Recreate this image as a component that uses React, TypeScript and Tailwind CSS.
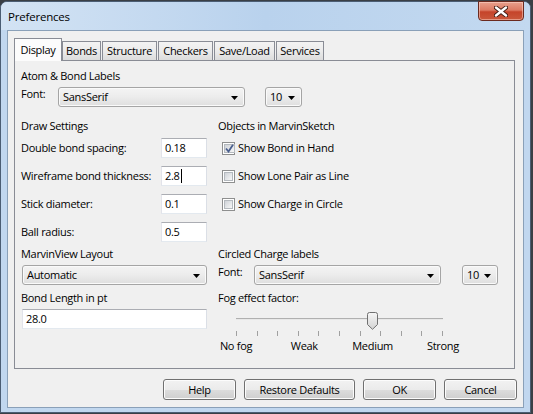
import React from "react";

function Arrow() {
  return (
    <svg width="7" height="4" viewBox="0 0 7 4" className="mt-[2px]">
      <path d="M0 0H7L3.5 4Z" fill="#000" />
    </svg>
  );
}

function Combo({ text, className }: { text: string; className: string }) {
  return (
    <div
      className={`h-[20px] ${className} flex items-center justify-between rounded-[3px] border border-[#a5a5a5] bg-gradient-to-b from-[#f4f4f4] via-[#ececec] to-[#dedede] pl-[4px] pr-[6px] shadow-[inset_0_0_0_1px_#fafafa]`}
    >
      <span className="leading-[14px]">{text}</span>
      <Arrow />
    </div>
  );
}

function Field({ text, className, caret }: { text: string; className: string; caret?: boolean }) {
  return (
    <div
      className={`h-[20px] ${className} flex items-center border border-[#abadb3] border-l-[#e2e3ea] border-r-[#dbdfe6] border-b-[#e3e9ef] bg-white pl-[3px]`}
    >
      <span className="leading-[14px]">{text}</span>
      {caret && <span className="ml-[1px] inline-block h-[14px] w-[1px] bg-black" />}
    </div>
  );
}

function Check({ checked }: { checked?: boolean }) {
  return (
    <div className="flex h-[13px] w-[13px] border border-[#8e8f8f] bg-white p-[1px]">
      <div className="flex flex-1 items-center justify-center border border-[#b4b9be] bg-gradient-to-br from-[#cfd3d8] to-[#f7f7f7]">
        {checked && (
          <svg width="9" height="9" viewBox="0 0 9 9">
            <path d="M1 4.5L3.5 7.5L8 0.8" fill="none" stroke="#4a5f8e" strokeWidth="1.8" />
          </svg>
        )}
      </div>
    </div>
  );
}

function Button({ text, className }: { text: string; className: string }) {
  return (
    <div
      className={`h-[21px] ${className} flex items-center justify-center rounded-[3px] border border-[#707070] bg-[linear-gradient(#f2f2f2_0%,#ebebeb_50%,#dddddd_51%,#cfcfcf_100%)] shadow-[inset_0_0_0_1px_#fcfcfc]`}
    >
      <span className="leading-[14px]">{text}</span>
    </div>
  );
}

function Tab({ text, className, selected }: { text: string; className: string; selected?: boolean }) {
  if (selected) {
    return (
      <div
        className={`relative z-10 mb-[-1px] h-[23px] ${className} flex justify-center border border-b-0 border-[#898c95] bg-[#fcfcfc] pt-[4px]`}
      >
        <span className="leading-[14px]">{text}</span>
      </div>
    );
  }
  return (
    <div
      className={`h-[19px] ${className} flex justify-center border border-b-0 border-[#898c95] bg-gradient-to-b from-[#f3f3f3] via-[#ebebeb] to-[#dcdcdc] pt-[2px]`}
    >
      <span className="leading-[14px]">{text}</span>
    </div>
  );
}

function CloseIcon() {
  return (
    <svg width="14" height="11" viewBox="0 0 14 11">
      <path d="M2 1.5L12 9.5M12 1.5L2 9.5" stroke="#3d1a12" strokeWidth="4.2" strokeLinecap="round" />
      <path d="M2 1.5L12 9.5M12 1.5L2 9.5" stroke="#ffffff" strokeWidth="2.4" strokeLinecap="round" />
    </svg>
  );
}

function Thumb() {
  return (
    <svg width="11" height="18" viewBox="0 0 11 18">
      <defs>
        <linearGradient id="tg" x1="0" y1="0" x2="0" y2="1">
          <stop offset="0" stopColor="#f6f6f6" />
          <stop offset="1" stopColor="#d3d3d3" />
        </linearGradient>
      </defs>
      <path
        d="M0.5 2.5Q0.5 0.5 2.5 0.5H8.5Q10.5 0.5 10.5 2.5V12.5L5.5 17.3L0.5 12.5Z"
        fill="url(#tg)"
        stroke="#707070"
      />
    </svg>
  );
}

export default function App() {
  const ticks = Array.from({ length: 11 }, (_, i) => i);
  return (
    <div className="h-[414px] w-[533px] overflow-hidden bg-[#3a3f45] pt-[1px] font-['Open_Sans','Noto_Sans',sans-serif] text-[11px] tracking-[-0.3px] text-black">
      <div className="flex h-[412px] w-[531px] flex-col rounded-t-[7px] border border-[#4b5d73] bg-[#c1d7ef]">
        {/* Title bar */}
        <div className="flex h-[28px] items-start rounded-t-[6px] bg-gradient-to-r from-[#d3e3f4] via-[#b9d2ed] to-[#c3d9f0]">
          <div className="pl-[7px] pt-[7px] text-[11.5px] leading-[15px] tracking-[-0.2px] text-black">Preferences</div>
          <div className="ml-auto mr-[6px] mt-[-1px] flex h-[20px] w-[46px] items-center justify-center rounded-b-[4px] border border-[#6b2a1f] bg-[linear-gradient(#e8a08d_0%,#dc7a63_45%,#c5442a_55%,#c9583c_100%)] shadow-[inset_0_0_0_1px_rgba(255,220,210,0.5)]">
            <CloseIcon />
          </div>
        </div>
        {/* Client area */}
        <div className="mx-[6px] flex h-[378px] flex-col border border-[#8aa0b8] bg-[#f0f0f0]">
          {/* Tabs */}
          <div className="mt-[7px] flex h-[22px] items-end pl-[6px]">
            <Tab text="Display" className="w-[48px]" selected />
            <Tab text="Bonds" className="w-[39px]" />
            <Tab text="Structure" className="ml-[1px] w-[55px]" />
            <Tab text="Checkers" className="ml-[1px] w-[55px]" />
            <Tab text="Save/Load" className="ml-[1px] w-[61px]" />
            <Tab text="Services" className="ml-[1px] w-[48px]" />
          </div>
          {/* Panel */}
          <div className="ml-[6px] flex h-[309px] w-[501px] flex-col border border-[#898c95] bg-[#f0f0f0] pl-[6px]">
            <div className="mt-[7px] h-[15px] leading-[15px]">Atom &amp; Bond Labels</div>
            <div className="mt-[4px] flex h-[20px] items-start">
              <div className="w-[37px] leading-[14px]">Font:</div>
              <Combo text="SansSerif" className="w-[187px]" />
              <Combo text="10" className="ml-[20px] w-[37px]" />
            </div>

            <div className="grid grid-cols-[186px_1fr] gap-x-[11px]">
              <div className="mt-[11px] h-[15px] leading-[15px]">Draw Settings</div>
              <div className="mt-[11px] h-[15px] leading-[15px]">Objects in MarvinSketch</div>

              <div className="mt-[5px] flex h-[20px] items-center justify-between">
                <span>Double bond spacing:</span>
                <Field text="0.18" className="w-[46px]" />
              </div>
              <div className="mt-[5px] flex h-[20px] items-center pl-[4px]">
                <Check checked />
                <span className="ml-[3px]">Show Bond in Hand</span>
              </div>

              <div className="mt-[8px] flex h-[20px] items-center justify-between">
                <span>Wireframe bond thickness:</span>
                <Field text="2.8" className="w-[46px]" caret />
              </div>
              <div className="mt-[8px] flex h-[20px] items-center pl-[4px]">
                <Check />
                <span className="ml-[3px]">Show Lone Pair as Line</span>
              </div>

              <div className="mt-[8px] flex h-[20px] items-center justify-between">
                <span>Stick diameter:</span>
                <Field text="0.1" className="w-[46px]" />
              </div>
              <div className="mt-[8px] flex h-[20px] items-center pl-[4px]">
                <Check />
                <span className="ml-[3px]">Show Charge in Circle</span>
              </div>

              <div className="mt-[8px] flex h-[20px] items-center justify-between">
                <span>Ball radius:</span>
                <Field text="0.5" className="w-[46px]" />
              </div>
              <div className="mt-[8px] h-[20px]" />

              <div className="mt-[4px] h-[15px] leading-[15px]">MarvinView Layout</div>
              <div className="mt-[4px] h-[15px] leading-[15px]">Circled Charge labels</div>

              <div className="mt-[4px] flex h-[20px] pl-[1px]">
                <Combo text="Automatic" className="w-[185px]" />
              </div>
              <div className="mt-[4px] flex h-[20px] items-start">
                <div className="w-[36px] leading-[14px]">Font:</div>
                <Combo text="SansSerif" className="w-[187px]" />
                <Combo text="10" className="ml-[21px] w-[36px]" />
              </div>

              <div className="mt-[5px] h-[15px] leading-[15px]">Bond Length in pt</div>
              <div className="mt-[5px] h-[15px] leading-[15px]">Fog effect factor:</div>

              <div className="mt-[4px] flex pl-[1px]">
                <Field text="28.0" className="w-[185px]" />
              </div>
              <div className="ml-[18px] mt-[7px] flex w-[207px] flex-col">
                <div className="relative h-[18px]">
                  <div className="absolute left-0 right-0 top-[6px] h-[2px] border-t border-[#b0b0b0] bg-[#e8e8e8]" />
                  <div className="absolute left-[131px] top-0">
                    <Thumb />
                  </div>
                </div>
                <div className="mt-[1px] flex h-[5px] justify-between">
                  {ticks.map((t) => (
                    <div key={t} className="h-[5px] w-[1px] bg-[#a0a0a0]" />
                  ))}
                </div>
                <div className="relative mt-[2px] h-[15px] leading-[15px]">
                  <span className="absolute left-[0%] -translate-x-1/2">No fog</span>
                  <span className="absolute left-[33%] -translate-x-1/2">Weak</span>
                  <span className="absolute left-[66%] -translate-x-1/2">Medium</span>
                  <span className="absolute left-[100%] -translate-x-1/2">Strong</span>
                </div>
              </div>
            </div>
          </div>
          {/* Buttons */}
          <div className="mt-[10px] flex justify-end gap-[8px] pr-[6px]">
            <Button text="Help" className="w-[73px]" />
            <Button text="Restore Defaults" className="w-[111px]" />
            <Button text="OK" className="w-[73px]" />
            <Button text="Cancel" className="w-[73px]" />
          </div>
        </div>
      </div>
    </div>
  );
}
